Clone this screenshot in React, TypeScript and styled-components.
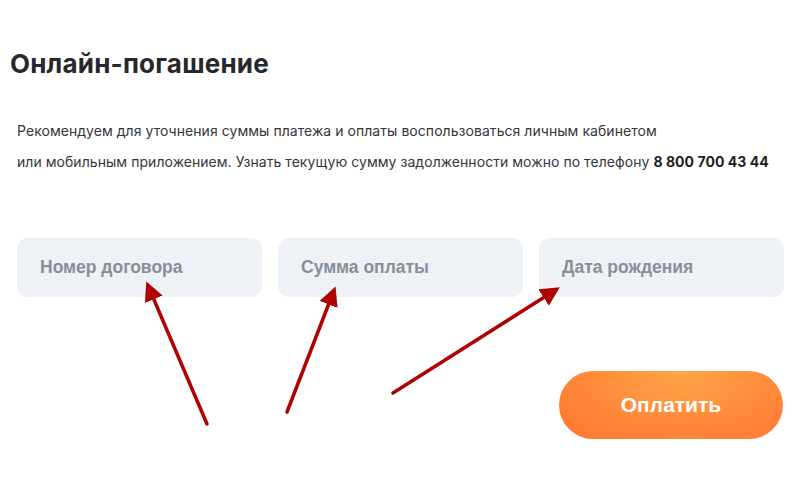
import React from 'react';
import styled, { createGlobalStyle } from 'styled-components';

const GlobalStyle = createGlobalStyle`
  html, body {
    margin: 0;
    padding: 0;
    background: #ffffff;
  }
`

const Page = styled.div`
  position: relative;
  width: 800px;
  height: 491px;
  padding: 44px 17px 0 10px;
  box-sizing: border-box;
  font-family: Inter, "Noto Sans", sans-serif;
  color: #2b2d31;
`

const Title = styled.h1`
  margin: 0;
  font-size: 26px;
  font-weight: 700;
  line-height: 40px;
  letter-spacing: 0.2px;
  color: #26282c;
`

const Text = styled.p`
  margin: 31px 0 0 7px;
  font-size: 14px;
  line-height: 31px;
  letter-spacing: 0.05px;
  color: #34363a;
`

const Phone = styled.b`
  font-weight: 700;
  color: #1f2124;
`

const Fields = styled.div`
  display: grid;
  grid-template-columns: repeat(3, 245px);
  column-gap: 16px;
  margin: 61px 0 0 7px;
`

const Field = styled.input`
  height: 59px;
  box-sizing: border-box;
  border: 0;
  border-radius: 11px;
  background: #eef2f6;
  padding: 0 23px;
  font-family: "Liberation Sans", Arial, sans-serif;
  font-size: 17.5px;
  font-weight: 700;
  color: #333;
  outline: none;
  &::placeholder {
    color: #868f98;
  }
`

const Actions = styled.div`
  display: flex;
  justify-content: flex-end;
  margin-top: 74px;
`

const PayButton = styled.button`
  width: 224px;
  height: 68px;
  border: 0;
  border-radius: 34px;
  background: radial-gradient(ellipse at 55% 0%, #ffa449 0%, #ff8a3a 55%, #ff7430 100%);
  color: #ffffff;
  font-family: "Liberation Sans", Arial, sans-serif;
  font-size: 21px;
  font-weight: 700;
  cursor: pointer;
`

const Arrows = styled.svg`
  position: absolute;
  left: 0;
  top: 0;
  pointer-events: none;
`

const arrows = [
  { x1: 207, y1: 424, x2: 149, y2: 288 },
  { x1: 287, y1: 412, x2: 333, y2: 293 },
  { x1: 393, y1: 393, x2: 554, y2: 291 },
];

function App() {
  return (
    <>
      <GlobalStyle />
      <Page>
        <Title>Онлайн-погашение</Title>
        <Text>
          Рекомендуем для уточнения суммы платежа и оплаты воспользоваться личным кабинетом
          <br />
          или мобильным приложением. Узнать текущую сумму задолженности можно по телефону{' '}
          <Phone>8 800 700 43 44</Phone>
        </Text>
        <Fields>
          <Field placeholder="Номер договора" />
          <Field placeholder="Сумма оплаты" />
          <Field placeholder="Дата рождения" />
        </Fields>
        <Actions>
          <PayButton type="button">Оплатить</PayButton>
        </Actions>
        <Arrows width="800" height="491" viewBox="0 0 800 491">
          <defs>
            <marker id="head" markerWidth="5.5" markerHeight="5.5" refX="3.5" refY="2.75" orient="auto" markerUnits="strokeWidth">
              <path d="M0,0 L5.5,2.75 L0,5.5 Z" fill="#b00000" />
            </marker>
          </defs>
          {arrows.map((a, i) => (
            <line
              key={i}
              x1={a.x1}
              y1={a.y1}
              x2={a.x2}
              y2={a.y2}
              stroke="#b00000"
              strokeWidth="3.5"
              strokeLinecap="round"
              markerEnd="url(#head)"
            />
          ))}
        </Arrows>
      </Page>
    </>
  );
}

export default App;
